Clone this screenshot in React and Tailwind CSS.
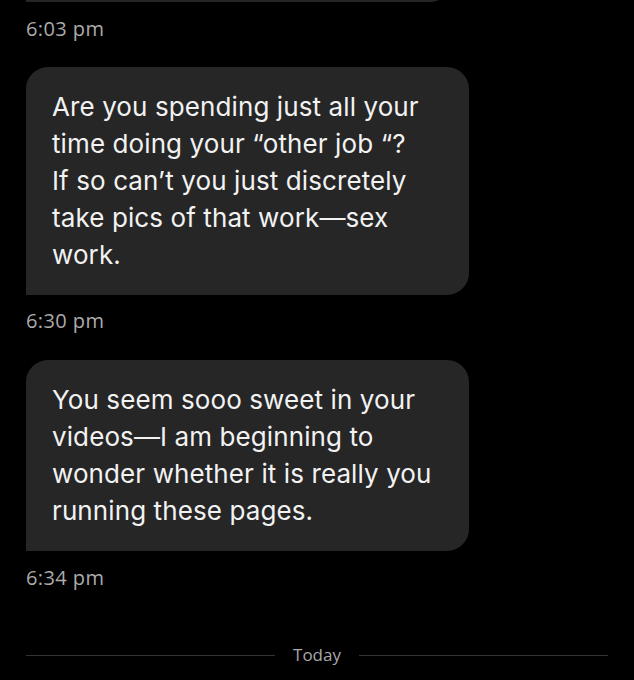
function Stamp({ children, className }) {
  return (
    <div className={`text-[20px] leading-[24px] tracking-[0.4px] text-[#ababab] font-['Open_Sans',sans-serif] ${className}`}>
      {children}
    </div>
  );
}

function Bubble({ children, className }) {
  return (
    <div
      className={`w-[443px] bg-[#262626] rounded-tl-[22px] rounded-tr-[22px] rounded-br-[22px] pl-[26px] pr-[16px] pt-[21px] pb-[22px] text-[26px] leading-[37px] text-[#f2f2f2] tracking-[0.1px] font-['Inter',sans-serif] ${className}`}
    >
      {children}
    </div>
  );
}

export default function App() {
  return (
    <div className="w-[634px] h-[680px] bg-black overflow-hidden flex flex-col pl-[26px]">
      <div className="mt-[-22px] h-[24px] w-[426px] bg-[#262626] rounded-br-[22px]" />
      <Stamp className="mt-[15px]">6:03 pm</Stamp>
      <Bubble className="mt-[26px]">
        Are you spending just all your
        <br />
        time doing your “other job “?
        <br />
        If so can’t you just discretely
        <br />
        take pics of that work—sex
        <br />
        work.
      </Bubble>
      <Stamp className="mt-[14px]">6:30 pm</Stamp>
      <Bubble className="mt-[27px]">
        You seem sooo sweet in your
        <br />
        videos—I am beginning to
        <br />
        wonder whether it is really you
        <br />
        running these pages.
      </Bubble>
      <Stamp className="mt-[15px]">6:34 pm</Stamp>
      <div className="mt-[53px] mr-[26px] flex items-center gap-[18px]">
        <div className="flex-1 h-px bg-[#333333]" />
        <div className="text-[17px] leading-[24px] text-[#a8a8a8] font-['Open_Sans',sans-serif]">Today</div>
        <div className="flex-1 h-px bg-[#333333]" />
      </div>
    </div>
  );
}
